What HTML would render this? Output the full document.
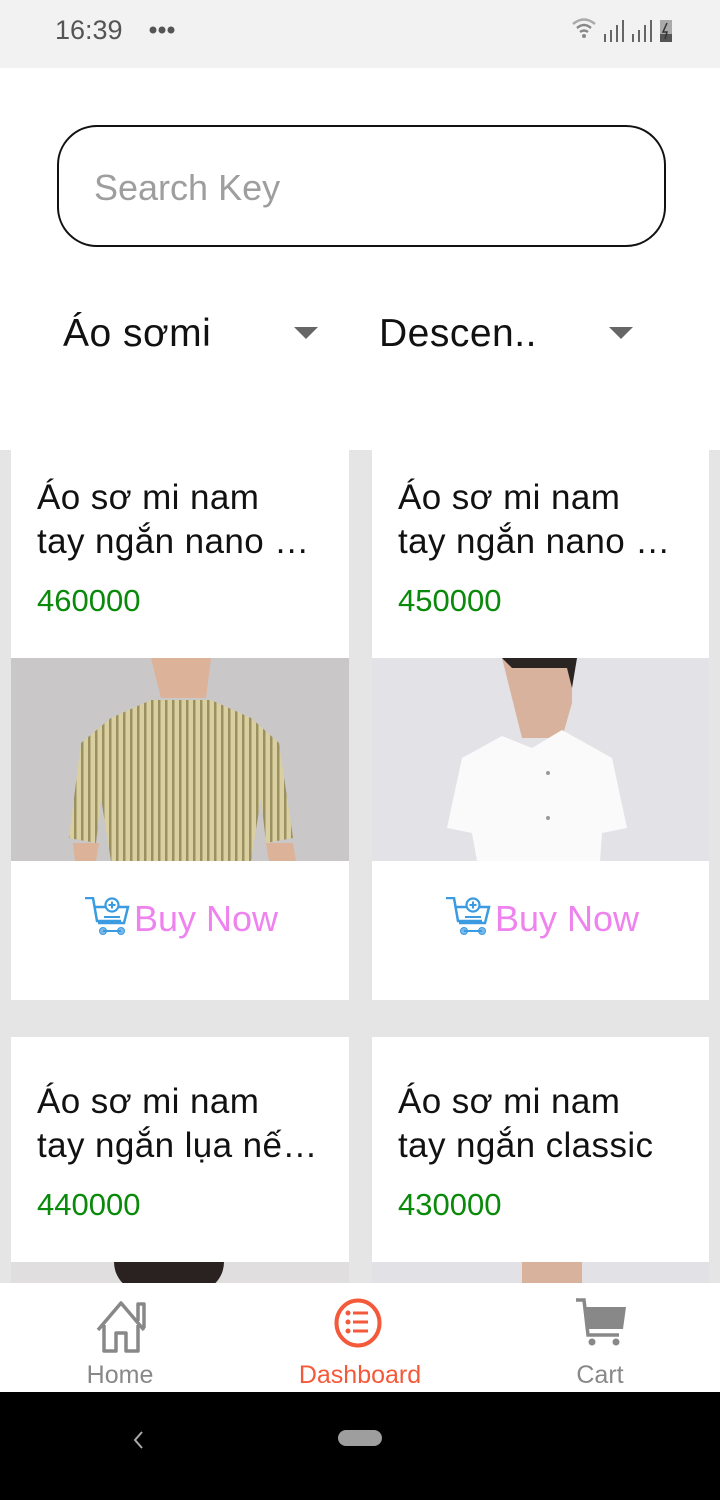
<!DOCTYPE html>
<html><head><meta charset="utf-8"><style>
*{margin:0;padding:0;box-sizing:border-box}
body{width:720px;height:1500px;overflow:hidden;font-family:"Liberation Sans",sans-serif;background:#fff;position:relative}
.abs{position:absolute}
.status{left:0;top:0;width:720px;height:68px;background:#f2f2f2}
.search{left:57px;top:125px;width:609px;height:122px;border:2px solid #111;border-radius:40px}
.search span{position:absolute;left:35px;top:40px;font-size:36px;color:#9e9e9e}
.dd{font-size:39px;color:#111;letter-spacing:0.5px}
.tri{width:0;height:0;border-left:12px solid transparent;border-right:12px solid transparent;border-top:12px solid #666}
.grid{left:0;top:450px;width:720px;height:833px;background:#e5e5e5;overflow:hidden}
.card{position:absolute;background:#fff;width:338px}
.t{position:absolute;left:26px;font-size:35px;color:#111;line-height:44px;white-space:nowrap;letter-spacing:0.4px}
.p{position:absolute;left:26px;font-size:31px;color:#0a8a0a}
.buy{position:absolute;top:36px;left:0;width:338px;text-align:center;font-size:36px;color:#ee82ee}
.nav{left:0;top:1283px;width:720px;height:109px;background:#fff}
.nl{position:absolute;top:78px;font-size:25px;text-align:center;width:240px}
.sys{left:0;top:1392px;width:720px;height:108px;background:#000}
</style></head><body>
<div class="abs status">
 <div class="abs" style="left:55px;top:15px;font-size:27px;color:#555">16:39</div>
 <svg class="abs" style="left:148px;top:24px" width="30" height="12"><circle cx="5" cy="6" r="3.5" fill="#555"/><circle cx="14" cy="6" r="3.5" fill="#555"/><circle cx="23" cy="6" r="3.5" fill="#555"/></svg>
 <svg class="abs" style="left:570px;top:16px" width="110" height="28" viewBox="0 0 110 28">
  <path d="M3 8 Q14 -1 25 8" stroke="#aaa" stroke-width="2.5" fill="none"/>
  <path d="M7 12 Q14 6 21 12" stroke="#888" stroke-width="2.5" fill="none"/>
  <path d="M10 16 Q14 13 18 16" stroke="#888" stroke-width="2.5" fill="none"/>
  <circle cx="14" cy="20" r="2" fill="#888"/>
  <rect x="34" y="18" width="2" height="8" fill="#666"/><rect x="40" y="14" width="2" height="12" fill="#666"/><rect x="46" y="9" width="2" height="17" fill="#666"/><rect x="52" y="4" width="2" height="22" fill="#666"/>
  <rect x="62" y="18" width="2" height="8" fill="#666"/><rect x="68" y="14" width="2" height="12" fill="#666"/><rect x="74" y="9" width="2" height="17" fill="#666"/><rect x="80" y="4" width="2" height="22" fill="#666"/>
  <rect x="90" y="4" width="12" height="22" fill="#aaa"/><rect x="90" y="18" width="12" height="8" fill="#555"/><path d="M97 7 L93 16 L97 16 L95 23" stroke="#333" stroke-width="1.5" fill="none"/>
 </svg>
</div>
<div class="abs search"><span>Search Key</span></div>
<div class="abs dd" style="left:63px;top:312px">Áo sơmi</div>
<div class="abs tri" style="left:294px;top:327px"></div>
<div class="abs dd" style="left:379px;top:312px">Descen..</div>
<div class="abs tri" style="left:609px;top:327px"></div>

<div class="abs grid">
 <div class="card" style="left:11px;top:0;height:550px">
  <div class="t" style="top:26px">Áo sơ mi nam<br>tay ngắn nano …</div>
  <div class="p" style="top:133px">460000</div>
  <svg class="abs" style="left:0;top:208px" width="338" height="203" viewBox="0 0 338 203">
   <defs><pattern id="st" width="7" height="10" patternUnits="userSpaceOnUse"><rect width="7" height="10" fill="#d9cfa0"/><rect width="2.5" height="10" fill="#9a9060"/></pattern></defs>
   <rect width="338" height="203" fill="#c9c7c7"/>
   <path d="M140 0 L200 0 L195 40 L150 40Z" fill="#dcb299"/>
   <path d="M58 180 L70 85 L100 60 L140 42 L200 42 L240 60 L268 85 L282 180 L255 185 L250 140 L240 203 L100 203 L90 140 L85 185Z" fill="url(#st)"/>
   <path d="M62 185 L88 185 L85 203 L64 203Z" fill="#dcb299"/><path d="M255 185 L282 185 L285 203 L258 203Z" fill="#dcb299"/>
  </svg>
  <div class="abs" style="left:0;top:411px;width:338px;height:139px">
   <div class="buy"><svg width="48" height="40" viewBox="0 0 46 40" style="vertical-align:-6px;margin-right:4px"><path d="M2 1 H10 L14 24 H38" stroke="#3a9be0" stroke-width="2.5" fill="none"/><path d="M12 10 H45 L41 26 H15" stroke="#3a9be0" stroke-width="2.5" fill="none"/><circle cx="29" cy="8" r="6.5" fill="#fff" stroke="#3a9be0" stroke-width="2.2"/><path d="M29 4.5V11.5M25.5 8H32.5" stroke="#3a9be0" stroke-width="2"/><path d="M21 20H37" stroke="#3a9be0" stroke-width="2"/><circle cx="20" cy="34" r="3.5" fill="#7ab8ea" stroke="#3a9be0"/><circle cx="38" cy="34" r="3.5" fill="#7ab8ea" stroke="#3a9be0"/><path d="M20 34H38" stroke="#3a9be0" stroke-width="2"/></svg>Buy Now</div>
  </div>
 </div>
 <div class="card" style="left:372px;top:0;height:550px;width:337px">
  <div class="t" style="top:26px">Áo sơ mi nam<br>tay ngắn nano …</div>
  <div class="p" style="top:133px">450000</div>
  <svg class="abs" style="left:0;top:208px" width="337" height="203" viewBox="0 0 337 203">
   <rect width="337" height="203" fill="#e3e3e7"/>
   <path d="M130 0 L200 0 L200 45 L190 80 L150 80 L140 40Z" fill="#d8b29c"/>
   <path d="M130 0 L205 0 L200 30 L195 10 L140 10Z" fill="#2a2422"/>
   <path d="M75 170 L90 100 L130 78 L160 90 L190 72 L240 100 L255 170 L230 175 L228 203 L105 203 L100 175Z" fill="#fafafa"/>
   <circle cx="176" cy="115" r="2" fill="#999"/><circle cx="176" cy="160" r="2" fill="#999"/>
  </svg>
  <div class="abs" style="left:0;top:411px;width:337px;height:139px">
   <div class="buy"><svg width="48" height="40" viewBox="0 0 46 40" style="vertical-align:-6px;margin-right:4px"><path d="M2 1 H10 L14 24 H38" stroke="#3a9be0" stroke-width="2.5" fill="none"/><path d="M12 10 H45 L41 26 H15" stroke="#3a9be0" stroke-width="2.5" fill="none"/><circle cx="29" cy="8" r="6.5" fill="#fff" stroke="#3a9be0" stroke-width="2.2"/><path d="M29 4.5V11.5M25.5 8H32.5" stroke="#3a9be0" stroke-width="2"/><path d="M21 20H37" stroke="#3a9be0" stroke-width="2"/><circle cx="20" cy="34" r="3.5" fill="#7ab8ea" stroke="#3a9be0"/><circle cx="38" cy="34" r="3.5" fill="#7ab8ea" stroke="#3a9be0"/><path d="M20 34H38" stroke="#3a9be0" stroke-width="2"/></svg>Buy Now</div>
  </div>
 </div>
 <div class="card" style="left:11px;top:587px;height:300px">
  <div class="t" style="top:43px">Áo sơ mi nam<br>tay ngắn lụa nế…</div>
  <div class="p" style="top:150px">440000</div>
  <div class="abs" style="left:0;top:225px;width:338px;height:80px;background:#e0dede"><div class="abs" style="left:103px;top:0;width:110px;height:30px;background:#2a2220;border-radius:0 0 40px 40px"></div></div>
 </div>
 <div class="card" style="left:372px;top:587px;height:300px;width:337px">
  <div class="t" style="top:43px">Áo sơ mi nam<br>tay ngắn classic</div>
  <div class="p" style="top:150px">430000</div>
  <div class="abs" style="left:0;top:225px;width:337px;height:80px;background:#e2e2e6"><div class="abs" style="left:150px;top:0;width:60px;height:30px;background:#d8b29c"></div></div>
 </div>
</div>

<div class="abs nav">
 <svg class="abs" style="left:93px;top:12px" width="56" height="62" viewBox="0 0 56 62"><path d="M5 35 L28 8 L51 35 M45 26 V9 H51 V33 M11 30 V56 H23 V38 H33 V56 H45 V30" stroke="#888" stroke-width="3.5" fill="none" stroke-linejoin="round"/></svg>
 <svg class="abs" style="left:333px;top:14px" width="50" height="52" viewBox="0 0 50 52"><ellipse cx="25" cy="26" rx="21.5" ry="22.5" stroke="#f4593a" stroke-width="4" fill="none"/><circle cx="15" cy="16" r="2.5" fill="#f4593a"/><circle cx="15" cy="25" r="2.5" fill="#f4593a"/><circle cx="15" cy="34" r="2.5" fill="#f4593a"/><path d="M20 16H35M20 25H35M20 34H35" stroke="#f4593a" stroke-width="3"/></svg>
 <svg class="abs" style="left:574px;top:14px" width="56" height="50" viewBox="0 0 56 50"><path d="M2 3 H10 L14 38 H45" stroke="#888" stroke-width="3.5" fill="none"/><path d="M12 10 H52 L49 32 H14Z" fill="#888"/><circle cx="18" cy="45" r="3.5" fill="#888"/><circle cx="42" cy="45" r="3.5" fill="#888"/></svg>
 <div class="nl" style="left:0;color:#888">Home</div>
 <div class="nl" style="left:240px;color:#f4593a">Dashboard</div>
 <div class="nl" style="left:480px;color:#888">Cart</div>
</div>
<div class="abs sys">
 <svg class="abs" style="left:130px;top:36px" width="16" height="24" viewBox="0 0 16 24"><path d="M12 4 L5 12 L12 20" stroke="#aaa" stroke-width="2" fill="none"/></svg>
 <div class="abs" style="left:338px;top:38px;width:44px;height:16px;border-radius:8px;background:#9e9e9e"></div>
</div>
</body></html>
